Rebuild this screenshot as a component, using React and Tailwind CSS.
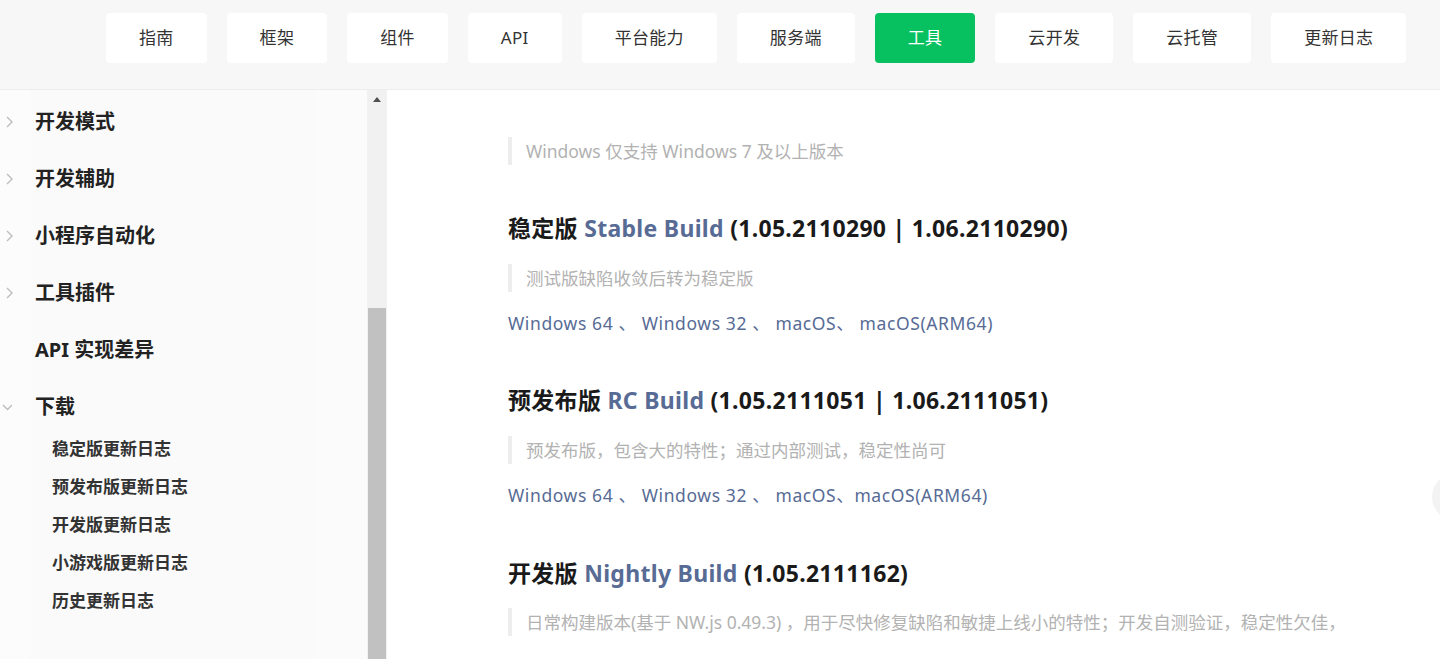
import React from 'react';

const font = { fontFamily: '"Noto Sans", "Noto Sans CJK SC", sans-serif' };

const navItems = ['指南', '框架', '组件', 'API', '平台能力', '服务端', '工具', '云开发', '云托管', '更新日志'];

const sideItems = [
    { label: '开发模式', arrow: 'right' },
    { label: '开发辅助', arrow: 'right' },
    { label: '小程序自动化', arrow: 'right' },
    { label: '工具插件', arrow: 'right' },
    { label: 'API 实现差异', arrow: null },
];

const subItems = ['稳定版更新日志', '预发布版更新日志', '开发版更新日志', '小游戏版更新日志', '历史更新日志'];

const Chevron = ({ dir }) => (
    <svg width="10" height="14" viewBox="0 0 10 14" className="shrink-0">
        {dir === 'right' ? (
            <path d="M3 2l5 5-5 5" fill="none" stroke="#bdbdbd" strokeWidth="1.4" />
        ) : (
            <path d="M1 5l4.5 4.5L10 5" fill="none" stroke="#bdbdbd" strokeWidth="1.4" />
        )}
    </svg>
);

const Quote = ({ children }) => (
    <div className="border-l-4 border-[#ededed] pl-[14px] h-[28px] leading-[28px] text-[17.5px] text-[#b2b2b2] whitespace-nowrap">
        {children}
    </div>
);

const Heading = ({ zh, en, ver }) => (
    <h2 className="h-[36px] leading-[36px] text-[23px] tracking-[0.3px] font-bold text-[#1a1a1a] whitespace-nowrap">
        {zh} <span className="text-[#576b95]">{en}</span> {ver}
    </h2>
);

const Links = ({ last }) => (
    <div className="h-[28px] leading-[28px] text-[17.5px] tracking-[0.6px] text-[#576b95] whitespace-pre">
        {'Windows 64 、 Windows 32 、 macOS、'}{last}
    </div>
);

const App = () => {
    return (
        <div className="w-[1440px] h-[659px] overflow-hidden bg-white relative" style={font}>
            {/* Top nav */}
            <div className="h-[90px] bg-[#f7f7f7] border-b border-[#ededed] flex items-start pl-[106px] pt-[13px] gap-[20px]">
                {navItems.map(item => (
                    <div
                        key={item}
                        className={`h-[50px] px-[33px] rounded-[4px] flex items-center text-[17px] tracking-[0.3px] ${item === '工具' ? 'bg-[#07c160] text-white' : 'bg-white text-[#333]'}`}
                    >
                        {item}
                    </div>
                ))}
            </div>

            <div className="flex h-[569px]">
                {/* Sidebar */}
                <div className="w-[367px] pt-[3px] bg-[linear-gradient(to_right,#fcfcfc_30px,#fafafa_30px,#fafafa_315px,#fbfbfb_315px)]">
                    {sideItems.map(item => (
                        <div key={item.label} className="h-[57px] flex items-center">
                            <div className="w-[35px] pl-[4px]">
                                {item.arrow && <Chevron dir={item.arrow} />}
                            </div>
                            <span className="text-[20px] font-bold text-[#222]">{item.label}</span>
                        </div>
                    ))}
                    <div className="h-[57px] flex items-center">
                        <div className="w-[35px] pl-[2px]">
                            <Chevron dir="down" />
                        </div>
                        <span className="text-[20px] font-bold text-[#222]">下载</span>
                    </div>
                    <div className="-mt-[5px] pl-[52px]">
                        {subItems.map(s => (
                            <div key={s} className="h-[38px] flex items-center text-[17px] font-bold text-[#333]">
                                {s}
                            </div>
                        ))}
                    </div>
                </div>

                {/* Scrollbar */}
                <div className="w-[20px] bg-[#f1f1f1] flex flex-col">
                    <div className="h-[18px] flex items-center justify-center">
                        <svg width="8" height="5" viewBox="0 0 8 5">
                            <path d="M0 5L4 0l4 5z" fill="#505050" />
                        </svg>
                    </div>
                    <div className="flex-1 flex flex-col">
                        <div className="h-[200px]" />
                        <div className="flex-1 mx-[1px] bg-[#c1c1c1]" />
                    </div>
                </div>

                {/* Content */}
                <div className="flex-1 pl-[121px] pt-[47px]">
                    <Quote>Windows 仅支持 Windows 7 及以上版本</Quote>

                    <div className="mt-[45px]">
                        <Heading zh="稳定版" en="Stable Build" ver="(1.05.2110290 | 1.06.2110290)" />
                    </div>
                    <div className="mt-[18px]">
                        <Quote>测试版缺陷收敛后转为稳定版</Quote>
                    </div>
                    <div className="mt-[17px]">
                        <Links last=" macOS(ARM64)" />
                    </div>

                    <div className="mt-[45px]">
                        <Heading zh="预发布版" en="RC Build" ver="(1.05.2111051 | 1.06.2111051)" />
                    </div>
                    <div className="mt-[18px]">
                        <Quote>预发布版，包含大的特性；通过内部测试，稳定性尚可</Quote>
                    </div>
                    <div className="mt-[17px]">
                        <Links last="macOS(ARM64)" />
                    </div>

                    <div className="mt-[46px]">
                        <Heading zh="开发版" en="Nightly Build" ver="(1.05.2111162)" />
                    </div>
                    <div className="mt-[17px]">
                        <Quote>日常构建版本(基于 NW.js 0.49.3) ，用于尽快修复缺陷和敏捷上线小的特性；开发自测验证，稳定性欠佳，</Quote>
                    </div>
                </div>
            </div>

            {/* Floating button at right edge */}
            <div className="absolute left-[1432px] top-[473px] w-[48px] h-[48px] rounded-full bg-[#f3f3f3]" />
        </div>
    );
};

export default App;
